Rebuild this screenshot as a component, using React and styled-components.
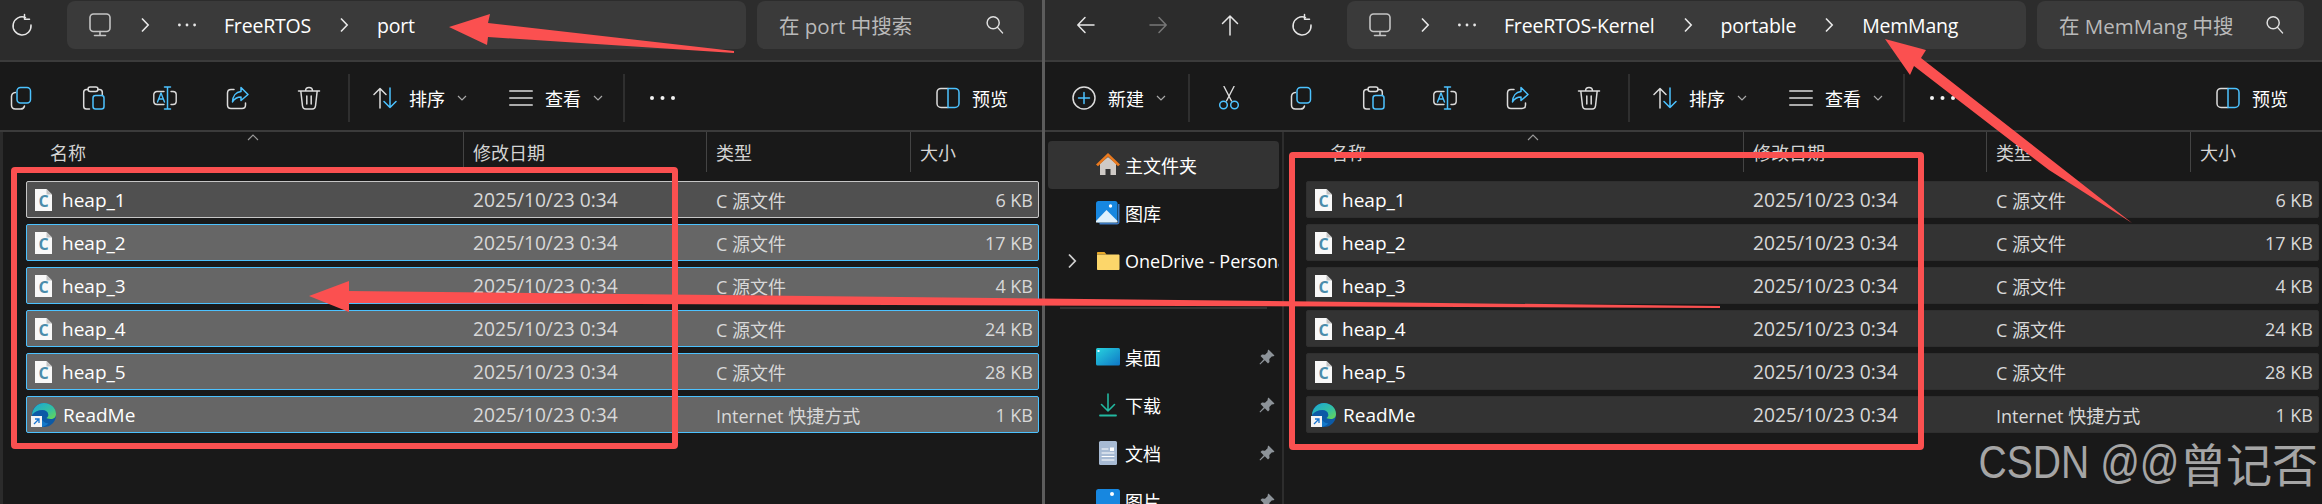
import React from 'react'
import styled, { createGlobalStyle } from 'styled-components'

const FONT = '"Open Sans", "Noto Sans CJK SC", sans-serif'
const BLUE = '#4cc2ff'
const LINE = '#dcdcdc'
const RED = '#fb5050'

const Global = createGlobalStyle`
  html, body { margin: 0; padding: 0; background: #191919; }
  body { width: 2322px; height: 504px; overflow: hidden; font-family: ${FONT}; color: #fff; }
`

const Page = styled.div`
  position: relative; display: flex; width: 2322px; height: 504px; overflow: hidden; background: #191919;
`
const Pane = styled.div`
  display: flex; flex-direction: column; flex: none; width: ${p => p.$width}px; height: 504px; overflow: hidden;
`
const PaneDivider = styled.div`
  flex: none; width: 3px; height: 504px; background: #5c5c5c;
`

const TitleBar = styled.div`
  display: flex; align-items: flex-start; flex: none; height: 62px; padding: 1px 18px 0 0; box-sizing: border-box;
  background: #2c2c2c; border-bottom: 2px solid #3b3b3b;
`
const NavGroup = styled.div`
  display: flex; flex: none; margin-left: ${p => p.$inset}px; margin-right: 9px;
`
const NavButton = styled.div`
  display: flex; align-items: center; justify-content: center; width: 72px; height: 48px;
  color: ${p => (p.$disabled ? '#777' : '#e6e6e6')};
`
const AddressBar = styled.div`
  display: flex; align-items: center; gap: 28px; flex: none; width: 679px; height: 48px;
  padding-left: 21px; box-sizing: border-box; background: #3a3a3a; border-radius: 8px; font-size: 19.5px; white-space: nowrap;
`
const Crumb = styled.span`
  flex: none; color: #fff; letter-spacing: -0.2px;
`
const SearchBox = styled.div`
  display: flex; align-items: center; justify-content: space-between; flex: none; width: 267px; height: 48px;
  margin-left: 11px; padding: 0 18px 0 22px; box-sizing: border-box; background: #3a3a3a; border-radius: 8px;
  font-size: 20.5px; color: #b9b9b9; white-space: nowrap;
`

const Toolbar = styled.div`
  display: flex; align-items: center; flex: none; height: 70px; padding: 4px 34px 0 0; box-sizing: border-box;
  background: #191919; border-bottom: 2px solid #3b3b3b; font-size: 18px;
`
const ToolGroup = styled.div`
  display: flex; flex: none; margin-left: ${p => p.$inset || 0}px;
`
const ToolButton = styled.div`
  display: flex; align-items: center; justify-content: center; width: 72px; height: 48px;
`
const ToolSep = styled.div`
  flex: none; width: 2px; height: 48px; margin: 0 ${p => p.$after ?? 23}px 0 ${p => p.$before ?? 3}px; background: #2f2f2f;
`
const MenuButton = styled.div`
  display: flex; align-items: center; flex: none; gap: 12px; margin: 0 ${p => p.$after}px 0 ${p => p.$before || 0}px; white-space: nowrap;
`
const MenuChevron = styled.span`
  display: flex; color: #a8a8a8;
`
const Dots = styled.div`
  display: flex; flex: none; color: #fff;
`
const Preview = styled.div`
  display: flex; align-items: center; gap: 12px; margin-left: auto; white-space: nowrap;
`

const Body = styled.div`
  display: flex; flex: 1; min-height: 0;
`
const Sidebar = styled.div`
  flex: none; width: 237px; padding: 9px 3px 0; box-sizing: border-box; overflow: hidden;
`
const SideDivider = styled.div`
  flex: none; width: 2px; background: #2d2d2d;
`
const SideItem = styled.div`
  display: grid; grid-template-columns: 48px 24px 1fr auto; align-items: center; height: 48px; border-radius: 4px;
  background: ${p => (p.$active ? '#333333' : 'transparent')}; font-size: 18px; white-space: nowrap; overflow: hidden;
`
const SideChevron = styled.span`
  display: flex; justify-content: center; color: #cfcfcf;
`
const SideLabel = styled.span`
  padding-left: 5px; overflow: hidden;
`
const PinSlot = styled.span`
  display: flex; padding-right: 4px; color: #8d9399;
`
const SideSep = styled.div`
  height: 2px; margin: 22px 12px 24px; background: #333;
`

const List = styled.div`
  flex: 1; min-width: 0; padding: 0 3px 0 ${p => p.$inset}px; border-left: ${p => (p.$strip ? '3px solid #2b2b2b' : '0')};
`
const HeaderRow = styled.div`
  position: relative; display: grid; grid-template-columns: 437px 243px 204px 1fr; height: 40px; margin-bottom: 9px; font-size: 18px; color: #d4d4d4;
`
const HeaderCell = styled.div`
  display: flex; align-items: center; padding-left: ${p => (p.$first ? 24 : 9)}px; border-left: ${p => (p.$first ? '0' : '1px solid #444')};
`
const SortCaret = styled.span`
  position: absolute; left: 221px; top: 1px; display: flex; color: #9a9a9a;
`
const FileRow = styled.div`
  display: grid; grid-template-columns: 437px 243px 204px 1fr; align-items: center; height: 37px; margin-bottom: 6px; box-sizing: border-box;
  border-radius: 2px; font-size: 18px; color: #d8d8d8;
  background: ${p => ({ focus: '#505050', selected: '#666666', plain: '#333333' }[p.$state])};
  border: ${p => ({ focus: '1.5px solid #c6c6c6', selected: '1.5px solid #4cc2ff', plain: '1px solid #2f2f2f' }[p.$state])};
`
const NameCell = styled.div`
  display: flex; align-items: center; height: 100%; padding-left: ${p => (p.$edge ? 4 : 8)}px; gap: ${p => (p.$edge ? 7 : 10)}px; color: #fff; font-size: 19px;
`
const DateCell = styled.div`
  padding-left: 9px; white-space: nowrap; font-size: 19.2px;
`
const TypeCell = styled.div`
  padding-left: 9px; white-space: nowrap;
`
const SizeCell = styled.div`
  padding-right: 5px; text-align: right; white-space: nowrap;
`

const Overlay = styled.svg`
  position: absolute; left: 0; top: 0; width: 2322px; height: 504px; pointer-events: none;
`
const Watermark = styled.div`
  position: absolute; right: 4px; top: 431px; display: flex; color: #a5a5a5; font: 46px/62px "Liberation Sans", sans-serif; white-space: pre;
`
const WatermarkLatin = styled.span`
  display: block; transform: scaleX(.85); transform-origin: right center;
`
const WatermarkCjk = styled.span`
  font-family: "Noto Sans CJK SC", sans-serif;
`

const Svg = ({ size = 24, children, ...rest }) => (
  <svg width={size} height={size} viewBox="0 0 24 24" fill="none" strokeLinecap="round" strokeLinejoin="round" {...rest}>{children}</svg>
)

const ArrowIcon = ({ dir }) => {
  const d = {
    left: 'M20 12H4M11 4.5 3.8 12l7.2 7.5',
    right: 'M4 12h16M13 4.5l7.2 7.5-7.2 7.5',
    up: 'M12 22V3M4.5 10.5 12 3l7.5 7.5',
  }[dir]
  return <Svg><path d={d} stroke="currentColor" strokeWidth="1.5" /></Svg>
}
const RefreshIcon = () => (
  <Svg>
    <path d="M15.5 4.6A9 9 0 1 0 21 12" stroke="#e6e6e6" strokeWidth="1.5" />
    <path d="M14.5 1.5v4.8h5" stroke="#e6e6e6" strokeWidth="1.5" />
  </Svg>
)
const MonitorIcon = () => (
  <Svg>
    <rect x="2" y="1" width="20" height="17.5" rx="3.5" stroke="#c4c4c4" strokeWidth="1.6" />
    <path d="M12 18.5v3.5M6.5 22.5h11" stroke="#c4c4c4" strokeWidth="1.6" />
  </Svg>
)
const CrumbChevron = () => (
  <svg width="10" height="16" viewBox="0 0 10 16" fill="none" style={{ flex: 'none' }}>
    <path d="M2 1.5 8.2 8 2 14.5" stroke="#e8e8e8" strokeWidth="1.6" />
  </svg>
)
const EllipsisIcon = ({ w = 18, r = 1.4, color = '#e8e8e8' }) => (
  <svg width={w} height="6" viewBox={`0 0 ${w} 6`} style={{ flex: 'none' }}>
    <circle cx={r} cy="3" r={r} fill={color} />
    <circle cx={w / 2} cy="3" r={r} fill={color} />
    <circle cx={w - r} cy="3" r={r} fill={color} />
  </svg>
)
const SearchIcon = () => (
  <Svg size={22}>
    <circle cx="10" cy="9.5" r="6.6" stroke="#e0e0e0" strokeWidth="1.6" />
    <path d="m14.8 14.6 5.4 6" stroke="#e0e0e0" strokeWidth="1.6" />
  </Svg>
)
const SmallChevron = () => (
  <svg width="10" height="6" viewBox="0 0 10 6" fill="none"><path d="m1 1 4 4 4-4" stroke="currentColor" strokeWidth="1.2" /></svg>
)
const NewIcon = () => (
  <Svg>
    <circle cx="12" cy="12" r="11" stroke={LINE} strokeWidth="1.5" />
    <path d="M12 6.5v11M6.5 12h11" stroke={BLUE} strokeWidth="1.5" />
  </Svg>
)
const CutIcon = () => (
  <Svg>
    <path d="M7 .5 14.5 15M17 .5 9.5 15" stroke={LINE} strokeWidth="1.4" />
    <circle cx="6.5" cy="19" r="3.8" stroke={BLUE} strokeWidth="1.5" />
    <circle cx="17.5" cy="19" r="3.8" stroke={BLUE} strokeWidth="1.5" />
  </Svg>
)
const CopyIcon = () => (
  <Svg>
    <path d="M6.5 6.5C4 6.8 2.5 8 2.5 10.5V19c0 2.6 1.4 4 4 4h5c2.2 0 3.6-1 4-3" stroke={LINE} strokeWidth="1.5" />
    <rect x="8" y="1.5" width="13.5" height="15.5" rx="3.5" stroke={BLUE} strokeWidth="1.5" />
  </Svg>
)
const PasteIcon = () => (
  <Svg>
    <path d="M8.5 23H5.5c-1.6 0-2.8-1.2-2.8-2.8V6.3C2.7 4.7 3.9 3.5 5.5 3.5H7M17 3.5h1.5c1.5 0 2.8 1.2 2.8 2.8V9" stroke={LINE} strokeWidth="1.5" />
    <rect x="7" y="1" width="10" height="4.5" rx="2.2" stroke={LINE} strokeWidth="1.5" />
    <rect x="12" y="9.5" width="11" height="13.5" rx="2.5" stroke={BLUE} strokeWidth="1.5" />
  </Svg>
)
const RenameIcon = () => (
  <Svg>
    <path d="M11 5.5H4C2.3 5.5.8 6.8.8 8.5v7c0 1.7 1.5 3 3.2 3h7M18 5.5h2c1.7 0 3.2 1.3 3.2 3v7c0 1.7-1.5 3-3.2 3h-2" stroke={LINE} strokeWidth="1.4" />
    <path d="M14.5 1v22M11.5 1h6M11.5 23h6" stroke={BLUE} strokeWidth="1.5" />
    <path d="m4.5 16 3.5-9 3.5 9M5.8 13h4.5" stroke={BLUE} strokeWidth="1.4" />
  </Svg>
)
const ShareIcon = () => (
  <Svg>
    <path d="M9 3.5H6C3.8 3.5 2.5 5 2.5 7v12c0 2.2 1.4 3.5 3.5 3.5h11c2 0 3.5-1.3 3.5-3.5v-2" stroke={LINE} strokeWidth="1.5" />
    <path d="M16 1.5 23 8.5 16 14.5V11C12 11 9.5 12.5 7.5 16c.2-6 3.5-10 8.5-10.5z" stroke={BLUE} strokeWidth="1.5" />
  </Svg>
)
const TrashIcon = () => (
  <Svg>
    <path d="M1.5 5h21M8.5 5C8.5 3 10 1.5 12 1.5S15.5 3 15.5 5M3.8 5l1.7 15c.2 1.8 1.5 3 3.2 3h6.6c1.7 0 3-1.2 3.2-3L20.2 5M9.800 10v8M14.200 10v8" stroke={LINE} strokeWidth="1.5" />
  </Svg>
)
const SortIcon = () => (
  <Svg>
    <path d="M7 22V2.5M1 8.5l6-6 6 6" stroke={LINE} strokeWidth="1.5" />
    <path d="M17 2v19.5M11 15.5l6 6 6-6" stroke={BLUE} strokeWidth="1.5" />
  </Svg>
)
const ViewIcon = () => (
  <Svg>
    <path d="M.8 5h22.4M.8 12h22.4M.8 19h22.4" stroke={LINE} strokeWidth="1.7" />
  </Svg>
)
const PreviewIcon = () => (
  <Svg>
    <path d="M12 2.5H5C2.8 2.5 1 4.2 1 6.5v11c0 2.2 1.8 4 4 4h7" stroke={LINE} strokeWidth="1.5" />
    <path d="M12 2.5h7c2.2 0 4 1.7 4 4v11c0 2.2-1.8 4-4 4h-7z" stroke={BLUE} strokeWidth="1.5" />
  </Svg>
)

const CFileIcon = () => (
  <svg width="17" height="22" viewBox="0 0 17 22" style={{ flex: 'none' }}>
    <path d="M0 0h11.5L17 5.5V22H0z" fill="#f8f8f8" />
    <path d="M11.5 0v5.5H17z" fill="#c3c3c3" />
    <text x="8.5" y="18" textAnchor="middle" fontSize="16" fontWeight="700" fontFamily="Open Sans" fill="#4a8cab">C</text>
  </svg>
)
const EdgeIcon = () => (
  <svg width="25" height="24" viewBox="0 0 25 24" style={{ flex: 'none' }}>
    <defs>
      <linearGradient id="edgeTop" x1="0" y1="0" x2="1" y2="1">
        <stop offset="0" stopColor="#1aa5d8" />
        <stop offset=".6" stopColor="#35c1a0" />
        <stop offset="1" stopColor="#6fd94c" />
      </linearGradient>
    </defs>
    <circle cx="13" cy="12" r="12" fill="#0c5aa6" />
    <path d="M1 12C1.5 5 6.5 0 13 0c7 0 12 5 12 11 0 3-2 5-5.5 5-2.5 0-4-1-4-1 1.5-1 2-2.2 1.8-3.5C17 8.5 14.5 7 11.5 7 7 7 3.5 8.5 1 12z" fill="url(#edgeTop)" />
    <path d="M10 13c0 4 3 7 7.5 7.5C15 23 12 24 10 23.5 7 22.5 7 16 10 13z" fill="#1478c8" />
    <rect x="0" y="13" width="11" height="11" fill="#f4f4f4" />
    <path d="M3 21l5-5M4 16h4v4" stroke="#1976d2" strokeWidth="1.3" fill="none" />
  </svg>
)
const HomeIcon = () => (
  <Svg>
    <path d="M4 10.5 12 4l8 6.5V22h-5.500v-6h-5v6H4z" fill="#cfcac6" />
    <path d="M0 11.5 12 0l12 11.500-2 1.800L12 3.500 2 13.300z" fill="#ea7a1f" />
  </Svg>
)
const GalleryIcon = () => (
  <Svg>
    <path d="M23.5 3v18c0 1.3-1 2.5-2.5 2.5H3.5v-1.500H21c.8 0 1-.5 1-1V3z" fill="#3a78c2" />
    <rect x="0" y="0" width="21.5" height="21.5" rx="2.5" fill="#1787e0" />
    <path d="M0 20 10.5 9 21.5 20v1.500H0z" fill="#dff1fd" />
    <circle cx="14.5" cy="5" r="1.7" fill="#fff" />
  </Svg>
)
const FolderIcon = () => (
  <Svg>
    <path d="M1 4c0-.6.4-1 1-1h6.500l2 2.500H1z" fill="#e8a92a" />
    <path d="M1 5.500h21.500c.5 0 1 .5 1 1V20c0 .6-.5 1-1 1H2c-.6 0-1-.4-1-1z" fill="#fcd66a" />
  </Svg>
)
const DesktopIcon = () => (
  <Svg>
    <defs>
      <linearGradient id="deskFill" x1="0" y1="0" x2="1" y2="1">
        <stop offset="0" stopColor="#27d3de" />
        <stop offset="1" stopColor="#0f76c6" />
      </linearGradient>
    </defs>
    <rect x="0" y="3" width="24" height="17.5" rx="1.5" fill="url(#deskFill)" />
    <rect x="1.5" y="5" width="2" height="2" fill="#e8fbff" />
  </Svg>
)
const DownloadIcon = () => (
  <Svg>
    <path d="M12 1v17M5.5 11.5 12 18l6.500-6.500" stroke="#22b8a0" strokeWidth="1.6" />
    <path d="M4 22.5h16" stroke="#22b8a0" strokeWidth="1.8" />
  </Svg>
)
const DocIcon = () => (
  <Svg>
    <rect x="3" y="0" width="18" height="24" rx="1.5" fill="#a7bad3" />
    <path d="M6 8h6M6 12h12M6 15.5h12M6 19h12" stroke="#fff" strokeWidth="1" />
    <rect x="14" y="6.5" width="4" height="3.5" fill="#fff" />
  </Svg>
)
const PictureIcon = () => (
  <Svg>
    <rect x="0" y="0" width="24" height="24" rx="2.5" fill="#1787e0" />
    <circle cx="16" cy="5" r="2" fill="#fff" />
  </Svg>
)
const PinIcon = () => (
  <svg width="16" height="16" viewBox="0 0 16 16"><path d="M9.5.5 15.5 6.5 14 7.5l-1-.3-2.700 2.700.2 3L9 14.500 5.800 11.300 1.200 15.500.5 14.800 4.700 10.200 1.500 7 3 5.500l3 .2L8.800 3l-.3-1z" fill="currentColor" /></svg>
)

const FILES = [
  { name: 'heap_1', type: 'C 源文件', size: '6 KB' },
  { name: 'heap_2', type: 'C 源文件', size: '17 KB' },
  { name: 'heap_3', type: 'C 源文件', size: '4 KB' },
  { name: 'heap_4', type: 'C 源文件', size: '24 KB' },
  { name: 'heap_5', type: 'C 源文件', size: '28 KB' },
  { name: 'ReadMe', type: 'Internet 快捷方式', size: '1 KB', edge: true },
]

const FileList = ({ inset, strip, selection }) => (
  <List $inset={inset} $strip={strip}>
    <HeaderRow>
      <HeaderCell $first>名称</HeaderCell>
      <HeaderCell>修改日期</HeaderCell>
      <HeaderCell>类型</HeaderCell>
      <HeaderCell>大小</HeaderCell>
      <SortCaret>
        <svg width="12" height="8" viewBox="0 0 12 8" fill="none"><path d="m1 7 5-5 5 5" stroke="currentColor" strokeWidth="1.1" /></svg>
      </SortCaret>
    </HeaderRow>
    {FILES.map((f, i) => (
      <FileRow key={f.name} $state={selection ? (i === 0 ? 'focus' : 'selected') : 'plain'}>
        <NameCell $edge={f.edge}>
          {f.edge ? <EdgeIcon /> : <CFileIcon />}
          {f.name}
        </NameCell>
        <DateCell>2025/10/23 0:34</DateCell>
        <TypeCell>{f.type}</TypeCell>
        <SizeCell>{f.size}</SizeCell>
      </FileRow>
    ))}
  </List>
)

const Address = ({ crumbs }) => (
  <AddressBar>
    <MonitorIcon />
    <CrumbChevron />
    <EllipsisIcon />
    {crumbs.map((c, i) => (
      <React.Fragment key={c}>
        {i > 0 && <CrumbChevron />}
        <Crumb>{c}</Crumb>
      </React.Fragment>
    ))}
  </AddressBar>
)

const Tools = ({ inset, children }) => (
  <Toolbar>
    {children}
    <ToolGroup $inset={inset}>
      <ToolButton><CopyIcon /></ToolButton>
      <ToolButton><PasteIcon /></ToolButton>
      <ToolButton><RenameIcon /></ToolButton>
      <ToolButton><ShareIcon /></ToolButton>
      <ToolButton><TrashIcon /></ToolButton>
    </ToolGroup>
    <ToolSep />
    <MenuButton $after={42}><SortIcon />排序<MenuChevron><SmallChevron /></MenuChevron></MenuButton>
    <MenuButton $after={19}><ViewIcon />查看<MenuChevron><SmallChevron /></MenuChevron></MenuButton>
    <ToolSep $before={1} $after={25} />
    <Dots><EllipsisIcon w={25} r={2} color="#f2f2f2" /></Dots>
    <Preview><PreviewIcon />预览</Preview>
  </Toolbar>
)

const SIDE_TOP = [
  { label: '主文件夹', icon: <HomeIcon />, active: true },
  { label: '图库', icon: <GalleryIcon /> },
  { label: 'OneDrive - Personal', icon: <FolderIcon />, expand: true },
]
const SIDE_PINNED = [
  { label: '桌面', icon: <DesktopIcon /> },
  { label: '下载', icon: <DownloadIcon /> },
  { label: '文档', icon: <DocIcon /> },
  { label: '图片', icon: <PictureIcon /> },
]

const SideRow = ({ item, pinned }) => (
  <SideItem $active={item.active}>
    <SideChevron>
      {item.expand && (
        <svg width="10" height="16" viewBox="0 0 10 16" fill="none"><path d="M2 1.5 8.2 8 2 14.5" stroke="currentColor" strokeWidth="1.8" /></svg>
      )}
    </SideChevron>
    {item.icon}
    <SideLabel>{item.label}</SideLabel>
    {pinned && <PinSlot><PinIcon /></PinSlot>}
  </SideItem>
)

export default function App() {
  return (
    <Page>
      <Global />
      <Pane $width={1042}>
        <TitleBar>
          <NavGroup $inset={-14}>
            <NavButton><RefreshIcon /></NavButton>
          </NavGroup>
          <Address crumbs={['FreeRTOS', 'port']} />
          <SearchBox>在 port 中搜索<SearchIcon /></SearchBox>
        </TitleBar>
        <Tools inset={-15} />
        <Body>
          <FileList inset={23} strip selection />
        </Body>
      </Pane>
      <PaneDivider />
      <Pane $width={1277}>
        <TitleBar>
          <NavGroup $inset={5}>
            <NavButton><ArrowIcon dir="left" /></NavButton>
            <NavButton $disabled><ArrowIcon dir="right" /></NavButton>
            <NavButton><ArrowIcon dir="up" /></NavButton>
            <NavButton><RefreshIcon /></NavButton>
          </NavGroup>
          <Address crumbs={['FreeRTOS-Kernel', 'portable', 'MemMang']} />
          <SearchBox>在 MemMang 中搜<SearchIcon /></SearchBox>
        </TitleBar>
        <Tools>
          <MenuButton $before={27} $after={0}><NewIcon />新建<MenuChevron><SmallChevron /></MenuChevron></MenuButton>
          <ToolSep $before={22} $after={3} />
          <ToolButton><CutIcon /></ToolButton>
        </Tools>
        <Body>
          <Sidebar>
            {SIDE_TOP.map(s => <SideRow key={s.label} item={s} />)}
            <SideSep />
            {SIDE_PINNED.map(s => <SideRow key={s.label} item={s} pinned />)}
          </Sidebar>
          <SideDivider />
          <FileList inset={22} />
        </Body>
      </Pane>
      <Overlay viewBox="0 0 2322 504">
        <rect x="14" y="170" width="661" height="276" rx="1" fill="none" stroke={RED} strokeWidth="6" />
        <rect x="1292" y="155" width="629" height="292" rx="1" fill="none" stroke={RED} strokeWidth="6" />
        <polygon fill={RED} points="449,27 490,14 488,23 734,51 734,53 488,37 487,45" />
        <polygon fill={RED} points="309,296 349,281 349,291 1720,306 1720,308 349,303 349,312" />
        <polygon fill={RED} points="1885,39 1926,50 1921,58 2132,223 2049,170 1914,66 1910,75" />
      </Overlay>
      <Watermark>
        <WatermarkLatin>CSDN @@</WatermarkLatin>
        <WatermarkCjk>曾记否</WatermarkCjk>
      </Watermark>
    </Page>
  )
}
